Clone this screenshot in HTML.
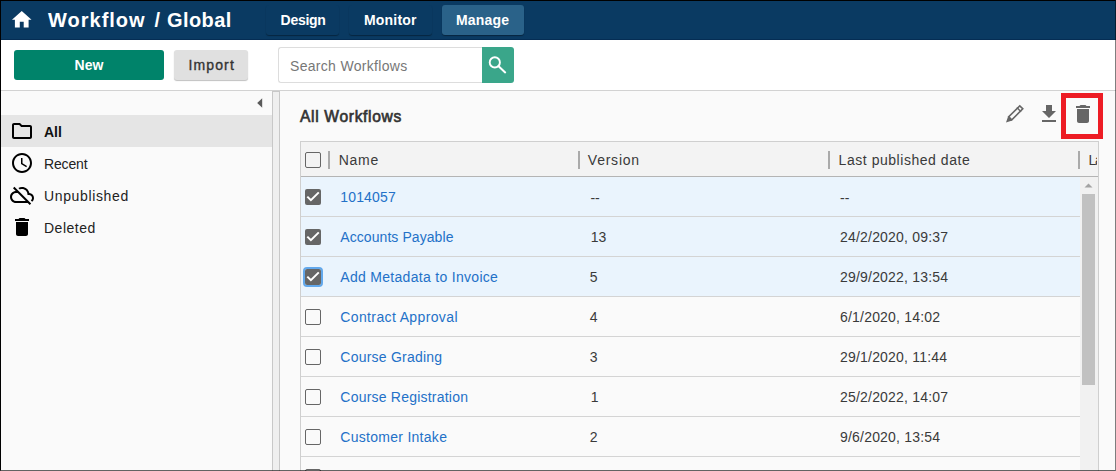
<!DOCTYPE html>
<html><head><meta charset="utf-8">
<style>
*{box-sizing:border-box;margin:0;padding:0}
html,body{width:1116px;height:471px;overflow:hidden;background:#fafafa;font-family:"Liberation Sans",sans-serif;position:relative}
.a{position:absolute}
.t{position:absolute;white-space:nowrap;line-height:1}
#hdr{left:0;top:0;width:1116px;height:40px;background:#0a3a62;border-bottom:1px solid #052d54}
.tab{position:absolute;top:5px;height:30px;border-radius:3px;box-shadow:0 1px 1px rgba(0,0,0,.35)}
#tool{left:0;top:40px;width:1116px;height:51px;background:#fff;border-bottom:1px solid #d2d2d2}
.cb{position:absolute;width:16px;height:16px;border:1.5px solid #666;border-radius:2px;background:transparent}
.cbk{position:absolute;width:16px;height:16px;border-radius:2px;background:#666}
.div{position:absolute;top:151px;width:2px;height:18px;background:#aaa}
.rl{position:absolute;left:301px;width:779px;height:1px;background:#d4d4d4}
.lnk{color:#2371c8;font-size:14px}
.txt{color:#3a3a3a;font-size:14px}
.dt{letter-spacing:0.2px}
</style></head>
<body>
<!-- header -->
<div id="hdr" class="a"></div>
<svg class="a" style="left:9.75px;top:8.15px" width="23.5" height="23.5" viewBox="0 0 24 24"><path fill="#fff" d="M10 20v-6h4v6h5v-8h3L12 3 2 12h3v8z"/></svg>
<div class="t" style="left:48px;top:10.4px;font-size:20px;font-weight:bold;color:#fff;letter-spacing:1px">Workflow</div>
<div class="t" style="left:154.5px;top:10.4px;font-size:20px;font-weight:bold;color:#fff">/</div>
<div class="t" style="left:167px;top:10.4px;font-size:20px;font-weight:bold;color:#fff;letter-spacing:0.4px">Global</div>
<div class="tab" style="left:266px;width:73px"></div>
<div class="tab" style="left:349px;width:83px"></div>
<div class="tab" style="left:442px;width:82px;background:#2a6289"></div>
<div class="t" style="left:280.6px;top:12.75px;font-size:14px;font-weight:bold;color:#fff;letter-spacing:-0.3px">Design</div>
<div class="t" style="left:364px;top:12.75px;font-size:14px;font-weight:bold;color:#fff;letter-spacing:0.2px">Monitor</div>
<div class="t" style="left:456px;top:12.75px;font-size:14px;font-weight:bold;color:#fff;letter-spacing:0.2px">Manage</div>

<!-- toolbar -->
<div id="tool" class="a"></div>
<div class="a" style="left:14px;top:50px;width:150px;height:30px;background:#00836a;border-radius:3px"></div>
<div class="t" style="left:74.6px;top:58.05px;font-size:14px;font-weight:bold;color:#fff">New</div>
<div class="a" style="left:174px;top:50px;width:74px;height:30px;background:#e0e0e0;border-radius:3px;box-shadow:0 1px 1px rgba(0,0,0,.25)"></div>
<div class="t" style="left:188.6px;top:58.25px;font-size:14px;color:#333;letter-spacing:1.1px;-webkit-text-stroke:0.35px #333">Import</div>
<div class="a" style="left:278px;top:47px;width:205px;height:36px;border:1px solid #ddd;border-right:none;border-radius:3px 0 0 3px;background:#fff"></div>
<div class="t" style="left:290px;top:59.45px;font-size:14px;color:#777;letter-spacing:0.31px">Search Workflows</div>
<div class="a" style="left:482px;top:47px;width:32px;height:36px;background:#3aa68a;border-radius:0 3px 3px 0"></div>
<svg class="a" style="left:482px;top:47px" width="32" height="36" viewBox="0 0 32 36"><circle cx="12.8" cy="15.4" r="5.1" fill="none" stroke="#fff" stroke-width="1.9"/><path d="M16.6 19.2 L23.2 25.4" stroke="#fff" stroke-width="2" stroke-linecap="round"/></svg>

<!-- sidebar -->
<svg class="a" style="left:257px;top:98px" width="6" height="10" viewBox="0 0 6 10"><path d="M5.2 0.3 L0.2 5 L5.2 9.7z" fill="#5a5a5a"/></svg>
<div class="a" style="left:1px;top:115px;width:271px;height:32px;background:#e5e5e5"></div>
<svg class="a" style="left:10px;top:119px" width="24" height="24" viewBox="0 0 24 24"><path fill="#000" d="M9.17 6l2 2H20v10H4V6h5.17M10 4H4c-1.1 0-1.99.9-1.99 2L2 18c0 1.1.9 2 2 2h16c1.1 0 2-.9 2-2V8c0-1.1-.9-2-2-2h-8l-2-2z"/></svg>
<svg class="a" style="left:10px;top:151px" width="24" height="24" viewBox="0 0 24 24"><path fill="#000" d="M11.99 2C6.47 2 2 6.48 2 12s4.47 10 9.99 10C17.52 22 22 17.52 22 12S17.52 2 11.99 2zM12 20c-4.42 0-8-3.580-8-8s3.58-8 8-8 8 3.58 8 8-3.58 8-8 8zm.5-13H11v6l5.25 3.15.75-1.23-4.5-2.67z"/></svg>
<svg class="a" style="left:10px;top:183px" width="24" height="24" viewBox="0 0 24 24"><path fill="#000" d="M24 15c0-2.64-2.05-4.78-4.65-4.96C18.67 6.59 15.64 4 12 4c-1.33 0-2.57.36-3.65.97l1.49 1.490C10.51 6.17 11.23 6 12 6c3.04 0 5.5 2.46 5.5 5.5v.5H19c1.66 0 3 1.34 3 3 0 .99-.48 1.85-1.21 2.4l1.41 1.41c1.09-.92 1.8-2.27 1.8-3.81zM4.41 3.86L3 5.27l2.77 2.77h-.42C2.34 8.36 0 10.91 0 14c0 3.31 2.690 6 6 6h11.73l2 2 1.41-1.41L4.41 3.86zM6 18c-2.21 0-4-1.79-4-4s1.79-4 4-4h1.73l8 8H6z"/></svg>
<svg class="a" style="left:10px;top:215px" width="24" height="24" viewBox="0 0 24 24"><path fill="#000" d="M6 19c0 1.1.9 2 2 2h8c1.1 0 2-.9 2-2V7H6v12zM19 4h-3.5l-1-1h-5l-1 1H5v2h14V4z"/></svg>
<div class="t" style="left:44px;top:125.05px;font-size:14px;font-weight:bold;color:#111">All</div>
<div class="t" style="left:44px;top:157px;font-size:14px;color:#222;letter-spacing:-0.15px">Recent</div>
<div class="t" style="left:44px;top:189px;font-size:14px;color:#222;letter-spacing:0.64px">Unpublished</div>
<div class="t" style="left:44px;top:221px;font-size:14px;color:#222;letter-spacing:0.5px">Deleted</div>

<!-- splitter -->
<div class="a" style="left:272px;top:91px;width:8px;height:380px;background:#efefef;border-left:1px solid #c8c8c8;border-right:1px solid #c8c8c8;border-top:1px solid #c8c8c8"></div>

<!-- main -->
<div class="t" style="left:300px;top:108.7px;font-size:15.6px;color:#333;-webkit-text-stroke:0.65px #333;letter-spacing:0.67px">All Workflows</div>
<svg class="a" style="left:1000px;top:100px" width="30" height="28" viewBox="0 0 30 28"><g transform="translate(6,22.6) rotate(-45)"><path d="M0 0 L6 -2.95 L6 2.95z" fill="#666"/><rect x="6" y="-2.15" width="15.6" height="4.3" fill="none" stroke="#666" stroke-width="1.6"/><path d="M18.3 -2.9 V2.9" stroke="#666" stroke-width="1.4"/></g></svg>
<svg class="a" style="left:1037px;top:102px" width="24" height="24" viewBox="0 0 24 24"><path fill="#666" d="M19 9h-4V3H9v6H5l7 7 7-7zM5 18v2h14v-2H5z"/></svg>
<svg class="a" style="left:1071px;top:102px" width="24" height="24" viewBox="0 0 24 24"><path fill="#666" d="M6 19c0 1.1.9 2 2 2h8c1.1 0 2-.9 2-2V7H6v12zM19 4h-3.5l-1-1h-5l-1 1H5v2h14V4z"/></svg>
<div class="a" style="left:1061px;top:93px;width:42px;height:46px;border:5px solid #ed1c24"></div>

<!-- table -->
<div class="a" style="left:300px;top:141px;width:799px;height:330px;border:1px solid #cfcfcf;border-bottom:none;background:#fafafa"></div>
<div class="a" style="left:301px;top:142px;width:797px;height:35px;background:#f3f3f3;border-bottom:1px solid #b4b4b4"></div>
<div class="cb" style="left:305px;top:152px"></div>
<div class="div" style="left:328px"></div>
<div class="div" style="left:578px"></div>
<div class="div" style="left:828px"></div>
<div class="div" style="left:1078px"></div>
<div class="t txt" style="left:338.7px;top:153.05px;letter-spacing:0.77px">Name</div>
<div class="t txt" style="left:587.8px;top:153.05px;letter-spacing:0.77px">Version</div>
<div class="t txt" style="left:838.6px;top:153.05px;letter-spacing:0.54px">Last published date</div>
<div class="a" style="left:1086px;top:142px;width:11px;height:33px;overflow:hidden"><div class="t txt" style="left:2.4px;top:11.05px;letter-spacing:-1.3px">Last</div></div>

<div class="a" style="left:301px;top:177px;width:779px;height:119px;background:#eaf4fd"></div>
<div class="rl" style="top:216px"></div>
<div class="rl" style="top:256px"></div>
<div class="rl" style="top:296px"></div>
<div class="rl" style="top:336px"></div>
<div class="rl" style="top:376px"></div>
<div class="rl" style="top:416px"></div>
<div class="rl" style="top:456px"></div>

<div class="cbk" style="left:305px;top:189px"></div>
<div class="cbk" style="left:305px;top:229px"></div>
<div class="a" style="left:303px;top:267px;width:20px;height:20px;border:2px solid #62a8ec;border-radius:4px"></div>
<div class="cbk" style="left:305px;top:269px"></div>
<svg class="a" style="left:305px;top:189px" width="16" height="16" viewBox="0 0 16 16"><path d="M2.3 7.6 L5.9 11.2 L13.8 3.4" fill="none" stroke="#fff" stroke-width="2"/></svg>
<svg class="a" style="left:305px;top:229px" width="16" height="16" viewBox="0 0 16 16"><path d="M2.3 7.6 L5.9 11.2 L13.8 3.4" fill="none" stroke="#fff" stroke-width="2"/></svg>
<svg class="a" style="left:305px;top:269px" width="16" height="16" viewBox="0 0 16 16"><path d="M2.3 7.6 L5.9 11.2 L13.8 3.4" fill="none" stroke="#fff" stroke-width="2"/></svg>
<div class="cb" style="left:305px;top:309px"></div>
<div class="cb" style="left:305px;top:349px"></div>
<div class="cb" style="left:305px;top:389px"></div>
<div class="cb" style="left:305px;top:429px"></div>
<div class="cb" style="left:305px;top:469px"></div>

<div class="t lnk" style="left:340.3px;top:189.95px;letter-spacing:0.15px">1014057</div>
<div class="t lnk" style="left:340.3px;top:229.95px;letter-spacing:0.07px">Accounts Payable</div>
<div class="t lnk" style="left:340.3px;top:269.95px;letter-spacing:0.3px">Add Metadata to Invoice</div>
<div class="t lnk" style="left:340.3px;top:309.95px;letter-spacing:0.37px">Contract Approval</div>
<div class="t lnk" style="left:340.3px;top:349.95px;letter-spacing:0.23px">Course Grading</div>
<div class="t lnk" style="left:340.3px;top:389.95px;letter-spacing:0.22px">Course Registration</div>
<div class="t lnk" style="left:340.3px;top:429.95px;letter-spacing:0.28px">Customer Intake</div>

<div class="t txt" style="left:590.4px;top:190.95px">--</div>
<div class="t txt" style="left:590.7px;top:229.95px">13</div>
<div class="t txt" style="left:589.8px;top:269.95px">5</div>
<div class="t txt" style="left:589.8px;top:309.95px">4</div>
<div class="t txt" style="left:589.8px;top:349.95px">3</div>
<div class="t txt" style="left:590.7px;top:389.95px">1</div>
<div class="t txt" style="left:589.8px;top:429.95px">2</div>

<div class="t txt" style="left:840px;top:190.95px">--</div>
<div class="t txt dt" style="left:840px;top:229.95px">24/2/2020, 09:37</div>
<div class="t txt dt" style="left:840px;top:269.95px">29/9/2022, 13:54</div>
<div class="t txt dt" style="left:840px;top:309.95px">6/1/2020, 14:02</div>
<div class="t txt dt" style="left:840px;top:349.95px">29/1/2020, 11:44</div>
<div class="t txt dt" style="left:840px;top:389.95px">25/2/2022, 14:07</div>
<div class="t txt dt" style="left:840px;top:429.95px">9/6/2020, 13:54</div>

<!-- scrollbar -->
<div class="a" style="left:1080px;top:177px;width:18px;height:294px;background:#f1f1f1"></div>
<svg class="a" style="left:1080px;top:177px" width="17" height="17" viewBox="0 0 17 17"><path d="M4.5 10.5 L8.5 6.5 L12.5 10.5z" fill="#a3a3a3"/></svg>
<div class="a" style="left:1082px;top:194px;width:13px;height:191px;background:#c1c1c1"></div>

<!-- frame -->
<div class="a" style="left:0;top:0;width:1116px;height:471px;border-top:1px solid #000;border-left:1px solid #000;border-right:1px solid rgba(0,0,0,.5);border-bottom:1px solid rgba(0,0,0,.6)"></div>
</body></html>
